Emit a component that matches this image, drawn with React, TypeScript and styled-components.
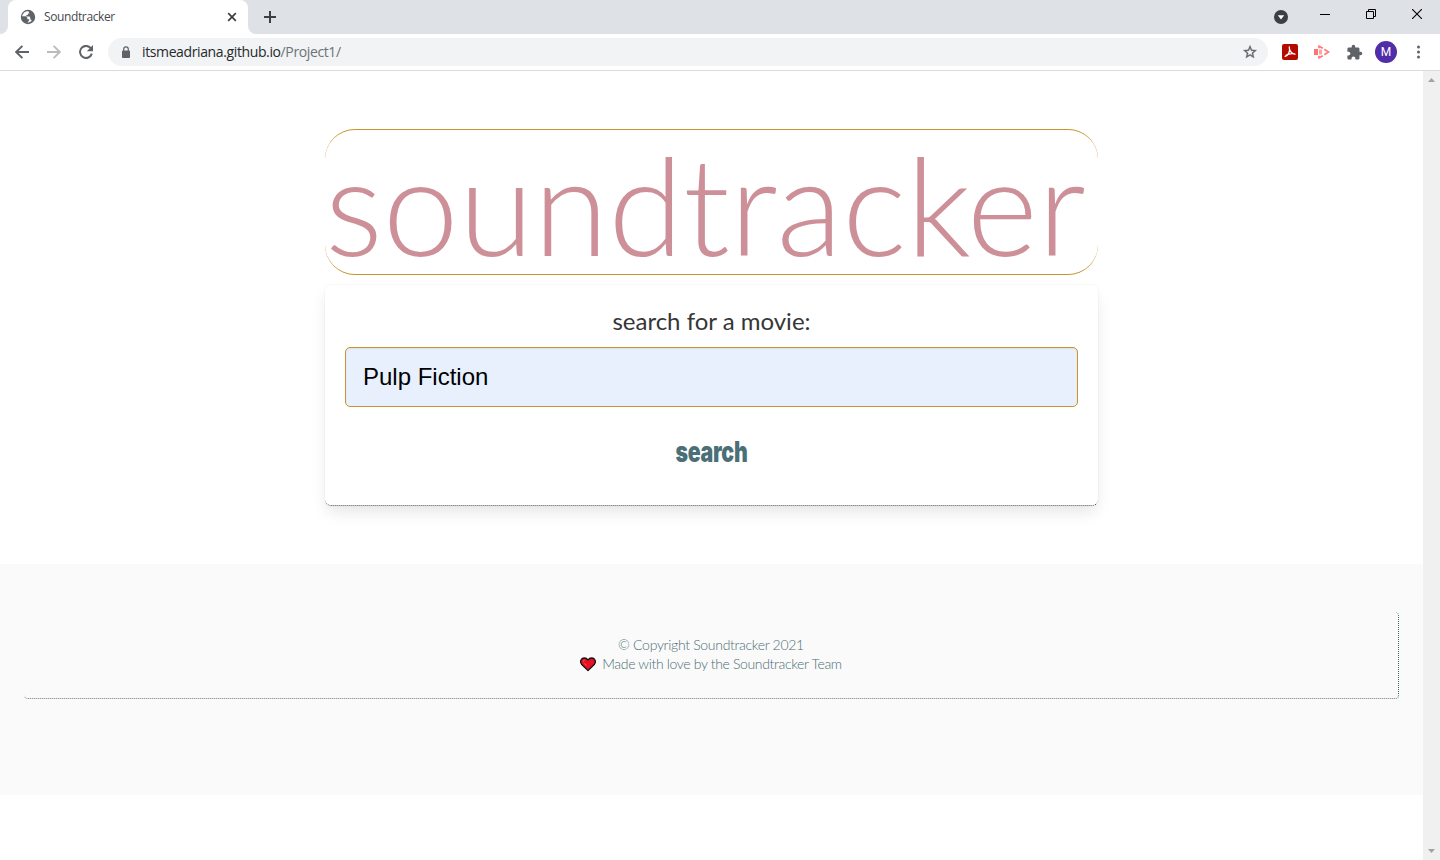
import React from "react";
import styled, { createGlobalStyle } from "styled-components";

const Global = createGlobalStyle`
  * { box-sizing: border-box; }
  html, body { margin: 0; padding: 0; background: #fff; overflow: hidden; }
`;

const Window = styled.div`
  width: 1440px;
  height: 860px;
  display: flex;
  flex-direction: column;
  background: #fff;
  overflow: hidden;
  font-family: "Open Sans", "Noto Sans", sans-serif;
`;

const PlainButton = styled.button`
  margin: 0;
  padding: 0;
  border: 0;
  background: none;
`;

const TabBar = styled.div`
  height: 34px;
  flex: none;
  display: flex;
  background: #dee1e6;
`;

const TabFoot = styled.svg`
  width: 8px;
  height: 8px;
  flex: none;
  align-self: flex-end;
`;

const Tab = styled.div`
  width: 240px;
  height: 34px;
  display: flex;
  align-items: center;
  padding: 0 10px 0 12px;
  background: #fff;
  border-radius: 8px 8px 0 0;
`;

const TabTitle = styled.span`
  flex: 1;
  margin-left: 8px;
  font-size: 12px;
  line-height: 34px;
  letter-spacing: -0.38px;
  color: #45494d;
`;

const NewTab = styled(PlainButton)`
  width: 28px;
  display: flex;
  align-items: center;
  justify-content: center;
`;

const WindowButtons = styled.div`
  margin-left: auto;
  display: flex;
  align-items: flex-start;
`;

const WindowButton = styled(PlainButton)<{ $w: number; $h?: number }>`
  width: ${(p) => p.$w}px;
  height: ${(p) => p.$h ?? 28}px;
  display: flex;
  align-items: center;
  justify-content: center;
`;

const Toolbar = styled.div`
  height: 37px;
  flex: none;
  display: flex;
  align-items: center;
  padding: 0 6px;
  border-bottom: 1px solid #d9dbde;
  background: #fff;
`;

const ToolButton = styled(PlainButton)`
  width: 32px;
  height: 28px;
  display: flex;
  align-items: center;
  justify-content: center;
`;

const AddressBar = styled.div`
  width: 1160px;
  height: 28px;
  display: flex;
  align-items: center;
  margin: 0 6px;
  padding: 0 10px 0 12px;
  border-radius: 14px;
  background: #f1f3f4;
`;

const Url = styled.span`
  flex: 1;
  margin-left: 10px;
  font-size: 14px;
  line-height: 28px;
  letter-spacing: -0.38px;
  color: #26292c;
`;

const UrlPath = styled.span`
  color: #6d7277;
`;

const Avatar = styled.span`
  width: 22px;
  height: 22px;
  border-radius: 50%;
  background: #512da8;
  color: #fff;
  font: 400 12px/22px Roboto, sans-serif;
  text-align: center;
`;

const Viewport = styled.div`
  flex: 1;
  display: flex;
  min-height: 0;
`;

const Page = styled.div`
  width: 1423px;
  display: flex;
  flex-direction: column;
  align-items: center;
  padding-top: 58px;
`;

const ScrollBar = styled.div`
  width: 17px;
  display: flex;
  flex-direction: column;
  align-items: center;
  justify-content: space-between;
  padding: 7px 0;
  background: #f0f0f0;
`;

const TitleFrame = styled.header`
  width: 773px;
  height: 146px;
  flex: none;
  border: solid #c8952b;
  border-width: 1px 0;
  border-radius: 30px;
`;

const Title = styled.h1`
  margin: 0;
  padding: 2px 0 0;
  font-family: Lato, sans-serif;
  font-weight: 300;
  font-size: 136px;
  line-height: 144px;
  height: 144px;
  white-space: nowrap;
  color: #ce9098;
`;

const Card = styled.form`
  width: 773px;
  height: 221px;
  flex: none;
  display: flex;
  flex-direction: column;
  align-items: center;
  margin: 10px 0 0;
  padding: 19px 20px 0;
  border-bottom: 1px dotted #4a4a4a;
  border-radius: 6px;
  box-shadow: 0 8px 16px -2px rgba(10, 10, 10, 0.1), 0 0 0 1px rgba(10, 10, 10, 0.02);
`;

const Label = styled.label`
  height: 43px;
  line-height: 34px;
  font-family: Lato, sans-serif;
  font-weight: 400;
  font-size: 24px;
  color: #363636;
  white-space: nowrap;
`;

const Field = styled.div`
  width: 733px;
  height: 60px;
  flex: none;
  padding-left: 17px;
  border: 1px solid #c8952b;
  border-radius: 5px;
  background: #e8f0fe;
  box-shadow: inset 0 1px 2px rgba(10, 10, 10, 0.07);
  font-family: "Liberation Sans", Arial, sans-serif;
  font-size: 24px;
  line-height: 58px;
  color: #000;
`;

const Submit = styled(PlainButton)`
  margin-top: 27px;
  height: 36px;
  font-family: Inter, sans-serif;
  font-weight: 900;
  font-size: 28px;
  line-height: 36px;
  letter-spacing: -0.3px;
  color: #4b6f76;
  transform: scaleX(0.76);
`;

const Footer = styled.footer`
  width: 100%;
  height: 231px;
  flex: none;
  margin-top: 58px;
  padding: 48px 24px 0;
  background: #fafafa;
`;

const FooterBox = styled.div`
  width: 1375px;
  height: 87px;
  padding-top: 23px;
  border-right: 1px dotted #2f6b66;
  border-bottom: 1px dotted #777;
  border-radius: 4px;
  font-family: Lato, sans-serif;
  font-weight: 300;
  font-size: 14px;
  line-height: 19px;
  color: #4b6f76;
`;

const FooterLine = styled.div<{ $spacing: number }>`
  display: flex;
  justify-content: center;
  align-items: center;
  gap: 6px;
  height: 19px;
  letter-spacing: ${(p) => p.$spacing}px;
`;

const HeartIcon = styled.svg`
  width: 16px;
  height: 15px;
  margin-top: 2px;
`;

const Globe = () => (
  <svg width="16" height="16" viewBox="0 0 16 16">
    <circle cx="8" cy="8" r="7.2" fill="#5f6368" />
    <path d="M8.3 2.2C5 2 2.6 4.2 2.2 7.2h3.500l1.600 1.400v1.700h1.900v1.200l-1.800 2.100c1.800 0 3.200-.6 4.200-1.800-.1-.9-.5-1.200-1.300-1.200V8.800L9.600 7.600H6.400V5.900h1.500V4.400h1.600z" fill="#fff" />
  </svg>
);

const Acrobat = () => (
  <svg width="16" height="16" viewBox="0 0 16 16">
    <rect width="16" height="16" rx="2" fill="#b30b00" />
    <path d="M7.300 3c.7 2.900.5 4.300-.5 6.100-.9 1.700-2 2.800-3.600 3.200M7.400 4.800c.7 2.600 2.200 4.700 5.600 5.400M4 11.200c2.300-1.300 5-2 8.500-1.400" fill="none" stroke="#fff" strokeWidth="1.300" strokeLinecap="round" />
  </svg>
);

const Screencast = () => (
  <svg width="16" height="14" viewBox="0 0 16 14">
    <path d="M0 4h4v6H0z" fill="#ff7373" />
    <path d="M5 4.500h3v5H5z" fill="#ffa3a3" />
    <path d="M5 3.200V1.200l3.800 2.100M10.300 4.200 14.600 7l-4.300 2.800M8.800 10.700 5 12.800v-2" fill="none" stroke="#ff7b7b" strokeWidth="1.700" />
  </svg>
);

const Heart = () => (
  <HeartIcon viewBox="0 0 16 15">
    <path d="M8 13.600 1.500 7.200C-.6 4.200 1.400 1 4.300 1 6 1 7.200 1.800 8 3 8.800 1.800 10 1 11.700 1c2.900 0 4.900 3.200 2.800 6.200z" fill="#e81224" stroke="#111" strokeWidth="1.300" strokeLinejoin="round" />
    <path d="M3.200 4.600c0-.8.6-1.300 1.400-1.300M4.500 6.500l2 1.800" stroke="#f4694f" strokeWidth="1" fill="none" />
  </HeartIcon>
);

export default function App() {
  return (
    <>
      <Global />
      <Window>
        <TabBar>
          <TabFoot viewBox="0 0 8 8"><path d="M8 0v8H0a8 8 0 0 0 8-8z" fill="#fff" /></TabFoot>
          <Tab>
            <Globe />
            <TabTitle>Soundtracker</TabTitle>
            <svg width="12" height="12" viewBox="0 0 12 12">
              <path d="M2.200 2.200l7.600 7.600M9.800 2.200 2.200 9.800" stroke="#3c4043" strokeWidth="1.700" />
            </svg>
          </Tab>
          <TabFoot viewBox="0 0 8 8"><path d="M0 0v8h8a8 8 0 0 1-8-8z" fill="#fff" /></TabFoot>
          <NewTab type="button" aria-label="New tab">
            <svg width="12" height="12" viewBox="0 0 12 12">
              <path d="M6 0v12M0 6h12" stroke="#3c4043" strokeWidth="2" />
            </svg>
          </NewTab>
          <WindowButtons>
            <WindowButton type="button" $w={42} $h={34}>
              <svg width="14" height="14" viewBox="0 0 14 14">
                <circle cx="7" cy="7" r="7" fill="#3c4043" />
                <path d="M3.800 5.200h6.400L7 9.400z" fill="#fff" />
              </svg>
            </WindowButton>
            <WindowButton type="button" $w={46}>
              <svg width="10" height="10" viewBox="0 0 10 10"><path d="M0 5h10v1H0z" fill="#000" /></svg>
            </WindowButton>
            <WindowButton type="button" $w={46}>
              <svg width="10" height="10" viewBox="0 0 10 10">
                <path d="M.5 2.500h7v7h-7zM2.500 2.500v-2h7v7h-2" fill="none" stroke="#000" />
              </svg>
            </WindowButton>
            <WindowButton type="button" $w={46}>
              <svg width="10" height="10" viewBox="0 0 10 10">
                <path d="M0 0l10 10M10 0 0 10" stroke="#000" strokeWidth="1.100" />
              </svg>
            </WindowButton>
          </WindowButtons>
        </TabBar>

        <Toolbar>
          <ToolButton type="button">
            <svg width="14" height="14" viewBox="0 0 14 14">
              <path d="M14 7H1.500M7.400.8 1.200 7l6.200 6.200" fill="none" stroke="#5f6368" strokeWidth="1.900" />
            </svg>
          </ToolButton>
          <ToolButton type="button">
            <svg width="14" height="14" viewBox="0 0 14 14">
              <path d="M0 7h12.500M6.600.8 12.800 7l-6.200 6.200" fill="none" stroke="#babcbe" strokeWidth="1.900" />
            </svg>
          </ToolButton>
          <ToolButton type="button">
            <svg width="14" height="14" viewBox="0 0 14 14">
              <path d="M12 3.500A6 6 0 1 0 12.800 8.600" fill="none" stroke="#5f6368" strokeWidth="2" />
              <path d="M14 0v6.200H7.800z" fill="#5f6368" />
            </svg>
          </ToolButton>
          <AddressBar>
            <svg width="12" height="13" viewBox="0 0 12 13">
              <path d="M2.500 5h7v6.500h-7z" fill="#5f6368" stroke="#5f6368" strokeLinejoin="round" />
              <path d="M3.700 5V3.200a2.300 2.300 0 0 1 4.600 0V5" fill="none" stroke="#5f6368" strokeWidth="1.200" />
            </svg>
            <Url>itsmeadriana.github.io<UrlPath>/Project1/</UrlPath></Url>
            <svg width="16" height="16" viewBox="0 0 24 24">
              <path d="M22 9.240l-7.190-.62L12 2 9.190 8.630 2 9.240l5.460 4.730L5.820 21 12 17.270 18.180 21l-1.630-7.030L22 9.240zM12 15.400l-3.760 2.270 1-4.280-3.320-2.880 4.380-.38L12 6.100l1.710 4.040 4.380.38-3.320 2.880 1 4.280L12 15.400z" fill="#5f6368" stroke="#5f6368" strokeWidth="0.500" />
            </svg>
          </AddressBar>
          <ToolButton type="button"><Acrobat /></ToolButton>
          <ToolButton type="button"><Screencast /></ToolButton>
          <ToolButton type="button">
            <svg width="17" height="17" viewBox="0 0 24 24">
              <path d="M20.500 11H19V7c0-1.100-.9-2-2-2h-4V3.500a2.500 2.500 0 0 0-5 0V5H4c-1.100 0-1.990.9-1.990 2v3.800H3.500c1.490 0 2.700 1.210 2.700 2.700s-1.210 2.700-2.700 2.700H2V20c0 1.100.9 2 2 2h3.800v-1.500c0-1.490 1.210-2.700 2.700-2.700s2.700 1.210 2.700 2.700V22H17c1.100 0 2-.9 2-2v-4h1.500a2.500 2.500 0 0 0 0-5z" fill="#5f6368" />
            </svg>
          </ToolButton>
          <ToolButton type="button"><Avatar>M</Avatar></ToolButton>
          <ToolButton type="button">
            <svg width="4" height="14" viewBox="0 0 4 14">
              <g fill="#5f6368"><circle cx="2.500" cy="2" r="1.500" /><circle cx="2.500" cy="7" r="1.500" /><circle cx="2.500" cy="12" r="1.500" /></g>
            </svg>
          </ToolButton>
        </Toolbar>

        <Viewport>
          <Page>
            <TitleFrame><Title>soundtracker</Title></TitleFrame>
            <Card>
              <Label>search for a movie:</Label>
              <Field>Pulp Fiction</Field>
              <Submit type="button">search</Submit>
            </Card>
            <Footer>
              <FooterBox>
                <FooterLine $spacing={-0.3}>© Copyright Soundtracker 2021</FooterLine>
                <FooterLine $spacing={-0.34}><Heart />Made with love by the Soundtracker Team</FooterLine>
              </FooterBox>
            </Footer>
          </Page>
          <ScrollBar>
            <svg width="7" height="4" viewBox="0 0 7 4"><path d="M0 4h7L3.500 0z" fill="#a3a3a3" /></svg>
            <svg width="7" height="4" viewBox="0 0 7 4"><path d="M0 0h7L3.500 4z" fill="#a3a3a3" /></svg>
          </ScrollBar>
        </Viewport>
      </Window>
    </>
  );
}
